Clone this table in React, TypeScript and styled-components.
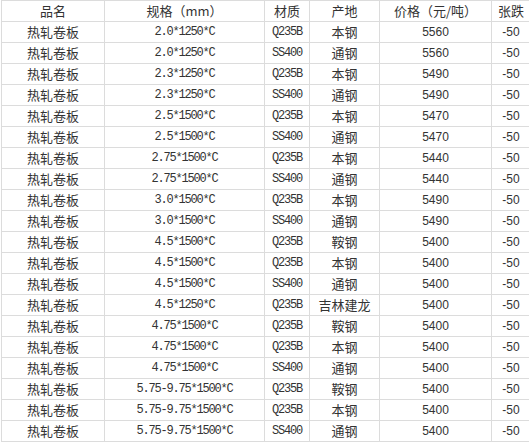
import React from "react";
import styled, { createGlobalStyle } from "styled-components";

const Global = createGlobalStyle`
  html, body { margin: 0; padding: 0; background: #fff; overflow: hidden; }
  body { font-family: "Noto Sans CJK SC", "Liberation Sans", sans-serif; color: #333; }
`;

const Table = styled.table`
  border-collapse: collapse;
  table-layout: fixed;
  width: 529px;
  margin-left: 1px;
  margin-top: 0;
`;

const Cell = styled.td<{ $kind?: "cjk" | "mono" | "num" }>`
  height: 20px;
  padding: 0;
  border: 1px solid #dcdcdc;
  text-align: center;
  vertical-align: middle;
  white-space: nowrap;
  overflow: hidden;
  line-height: 20px;
  color: #333;
  font-family: ${(p) =>
    p.$kind === "mono"
      ? `"Liberation Mono", monospace`
      : p.$kind === "num"
      ? `"Liberation Sans", Arial, sans-serif`
      : `"Noto Sans CJK SC", sans-serif`};
  font-size: ${(p) => (p.$kind === "mono" ? "12px" : p.$kind === "num" ? "12px" : "13px")};
  letter-spacing: ${(p) => (p.$kind === "mono" ? "-1.2px" : "0")};
`;

const HeadCell = styled(Cell).attrs({ as: "th" })`
  font-weight: normal;
`;

type Row = [string, string, string, string, string];

const rows: Row[] = [
  ["2.0*1250*C", "Q235B", "本钢", "5560", "-50"],
  ["2.0*1250*C", "SS400", "通钢", "5560", "-50"],
  ["2.3*1250*C", "Q235B", "本钢", "5490", "-50"],
  ["2.3*1250*C", "SS400", "通钢", "5490", "-50"],
  ["2.5*1500*C", "Q235B", "本钢", "5470", "-50"],
  ["2.5*1500*C", "SS400", "通钢", "5470", "-50"],
  ["2.75*1500*C", "Q235B", "本钢", "5440", "-50"],
  ["2.75*1500*C", "SS400", "通钢", "5440", "-50"],
  ["3.0*1500*C", "Q235B", "本钢", "5490", "-50"],
  ["3.0*1500*C", "SS400", "通钢", "5490", "-50"],
  ["4.5*1500*C", "Q235B", "鞍钢", "5400", "-50"],
  ["4.5*1500*C", "Q235B", "本钢", "5400", "-50"],
  ["4.5*1500*C", "SS400", "通钢", "5400", "-50"],
  ["4.5*1250*C", "Q235B", "吉林建龙", "5400", "-50"],
  ["4.75*1500*C", "Q235B", "鞍钢", "5400", "-50"],
  ["4.75*1500*C", "Q235B", "本钢", "5400", "-50"],
  ["4.75*1500*C", "SS400", "通钢", "5400", "-50"],
  ["5.75-9.75*1500*C", "Q235B", "鞍钢", "5400", "-50"],
  ["5.75-9.75*1500*C", "Q235B", "本钢", "5400", "-50"],
  ["5.75-9.75*1500*C", "SS400", "通钢", "5400", "-50"],
];

const widths = [103, 160, 45, 70, 112, 39];

export default function App() {
  return (
    <>
      <Global />
      <Table>
        <colgroup>
          {widths.map((w, i) => (
            <col key={i} style={{ width: w }} />
          ))}
        </colgroup>
        <thead>
          <tr>
            <HeadCell>品名</HeadCell>
            <HeadCell>规格（mm）</HeadCell>
            <HeadCell>材质</HeadCell>
            <HeadCell>产地</HeadCell>
            <HeadCell>价格（元/吨）</HeadCell>
            <HeadCell>张跌</HeadCell>
          </tr>
        </thead>
        <tbody>
          {rows.map((r, i) => (
            <tr key={i}>
              <Cell>热轧卷板</Cell>
              <Cell $kind="mono">{r[0]}</Cell>
              <Cell $kind="mono">{r[1]}</Cell>
              <Cell>{r[2]}</Cell>
              <Cell $kind="num">{r[3]}</Cell>
              <Cell $kind="num">{r[4]}</Cell>
            </tr>
          ))}
        </tbody>
      </Table>
    </>
  );
}
